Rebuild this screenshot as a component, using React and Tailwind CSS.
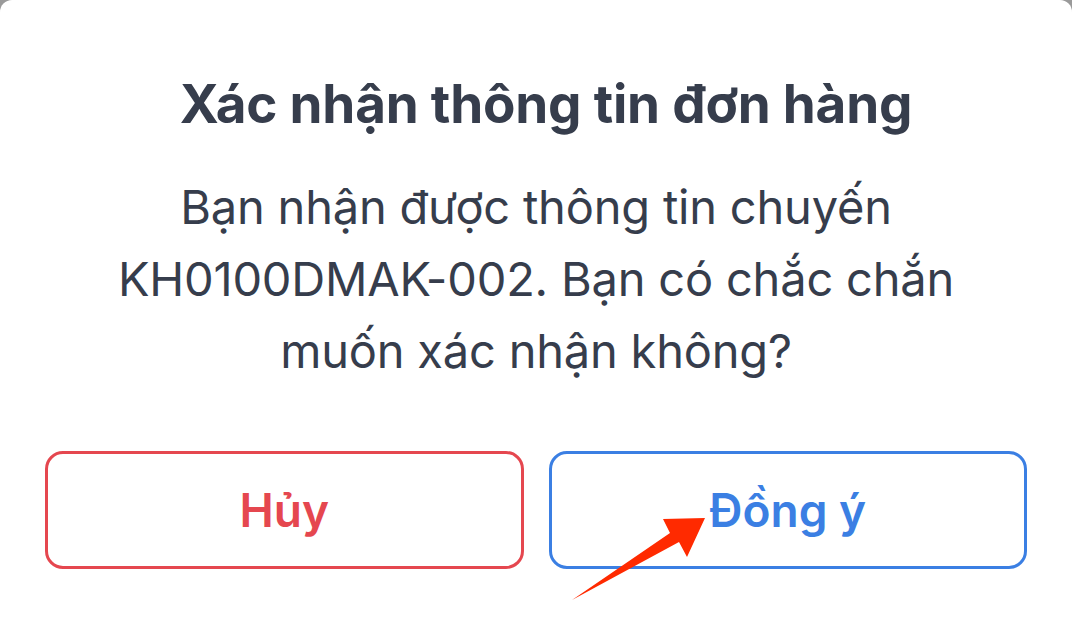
import React from "react";

const App = () => {
  return (
    <div className="w-[1072px] h-[626px] bg-[#9a9a9a] overflow-hidden" style={{ fontFamily: "Inter, 'Noto Sans', sans-serif" }}>
      <div className="relative w-full h-full bg-white rounded-t-[12px] flex flex-col items-center">
        <h1 className="mt-[72px] ml-[20px] text-[53px] leading-[64px] font-bold text-[#363d4c] tracking-[-0.2px]">
          Xác nhận thông tin đơn hàng
        </h1>
        <div className="mt-[35px] text-[47px] leading-[72px] text-[#363d4c] text-center tracking-[-0.2px]">
          <div>Bạn nhận được thông tin chuyến</div>
          <div>KH0100DMAK-002. Bạn có chắc chắn</div>
          <div>muốn xác nhận không?</div>
        </div>
        <div className="mt-[64px] w-full px-[45px] flex gap-[25px]">
          <button className="flex-1 h-[118px] rounded-[18px] border-[3px] border-[#e5474f] text-[#e5474f] text-[46px] font-semibold">
            Hủy
          </button>
          <button className="flex-1 h-[118px] rounded-[18px] border-[3px] border-[#3b7fe3] text-[#3b7fe3] text-[46px] font-semibold">
            Đồng ý
          </button>
        </div>
        <svg className="absolute left-0 top-0 pointer-events-none" width="1072" height="626" viewBox="0 0 1072 626">
          <polygon points="572,600 670,533 663,519 705,518 687,557 679,542" fill="#ff2a00" />
        </svg>
      </div>
    </div>
  );
};

export default App;
